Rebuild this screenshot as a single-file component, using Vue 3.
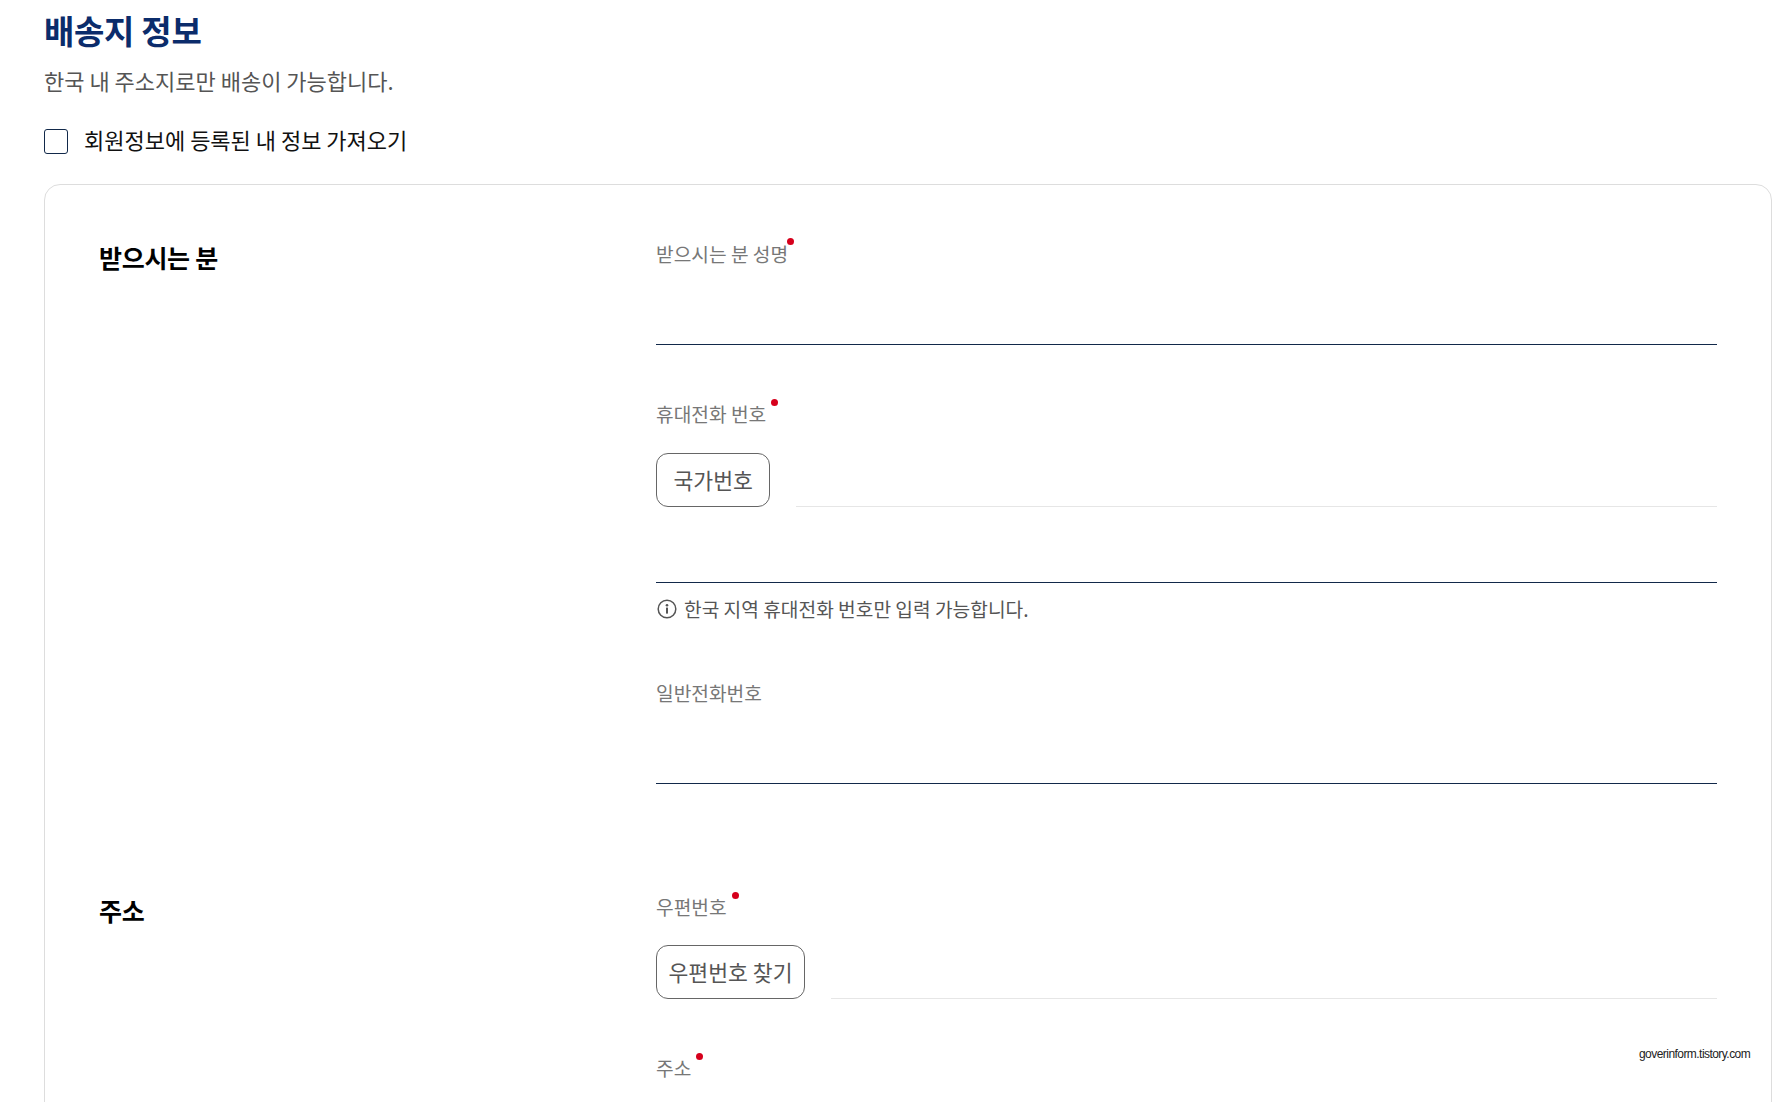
<script setup>
const groups = [
  {
    title: '받으시는 분',
    cls: 'group-a',
    fields: [
      { label: '받으시는 분 성명', required: true, kind: 'line', cls: 'f-name' },
      { label: '휴대전화 번호', required: true, kind: 'phone', button: '국가번호', cls: 'f-phone' },
      { label: '일반전화번호', required: false, kind: 'line', cls: 'f-tel' },
    ],
  },
  {
    title: '주소',
    cls: 'group-b',
    fields: [
      { label: '우편번호', required: true, kind: 'zip', button: '우편번호 찾기', cls: 'f-zip' },
      { label: '주소', required: true, kind: 'none', cls: 'f-addr' },
    ],
  },
]
</script>

<template>
  <div class="page">
    <h1 class="title">배송지 정보</h1>
    <p class="desc">한국 내 주소지로만 배송이 가능합니다.</p>
    <label class="check">
      <span class="box"></span>
      <span class="check-text">회원정보에 등록된 내 정보 가져오기</span>
    </label>
    <section class="card">
      <div v-for="g in groups" :key="g.title" class="group" :class="g.cls">
        <h2 class="group-title">{{ g.title }}</h2>
        <div class="fields">
          <div v-for="f in g.fields" :key="f.label" class="field" :class="f.cls">
            <div class="label"><span class="label-text" :class="{ req: f.required }">{{ f.label }}</span></div>
            <div v-if="f.kind === 'line'" class="underline"></div>
            <template v-if="f.kind === 'phone' || f.kind === 'zip'">
              <div class="btn-row">
                <button class="btn" type="button">{{ f.button }}</button>
                <div class="thin"></div>
              </div>
            </template>
            <template v-if="f.kind === 'phone'">
              <div class="underline second"></div>
              <div class="help">
                <svg class="info" viewBox="0 0 20 20" width="20" height="20" fill="none">
                  <circle cx="10" cy="10" r="8.8" stroke="#555" stroke-width="1.5" />
                  <circle cx="10" cy="6.2" r="1.3" fill="#555" />
                  <rect x="9" y="8.6" width="2" height="6" fill="#555" />
                </svg>
                <span>한국 지역 휴대전화 번호만 입력 가능합니다.</span>
              </div>
            </template>
          </div>
        </div>
      </div>
      <span class="mark">goverinform.tistory.com</span>
    </section>
  </div>
</template>

<style scoped>
.page {
  height: 1102px;
  overflow: hidden;
  box-sizing: border-box;
  padding: 0 19px 0 44px;
  background: #fff;
  font-family: "Noto Sans CJK KR", "Noto Sans", sans-serif;
}
.title {
  margin: 0;
  padding-top: 7px;
  font-size: 33px;
  line-height: 46px;
  font-weight: 700;
  color: #0b2c6b;
  letter-spacing: -0.3px;
}
.desc {
  margin: 11px 0 0;
  font-size: 22px;
  line-height: 32px;
  color: #555;
  font-weight: 400;
}
.check {
  display: flex;
  align-items: center;
  gap: 16px;
  margin-top: 27px;
  height: 32px;
}
.box {
  width: 24px;
  height: 25px;
  box-sizing: border-box;
  margin-top: 4px;
  border: 1px solid #12294a;
  border-radius: 3px;
  background: #fff;
}
.check-text {
  font-size: 22px;
  line-height: 32px;
  color: #111;
}
.card {
  position: relative;
  margin-top: 29px;
  height: 1100px;
  box-sizing: border-box;
  border: 1px solid #ddd;
  border-radius: 16px;
  padding: 54px 54px 0;
}
.group {
  display: grid;
  grid-template-columns: 557px 1061px;
}
.group-b {
  margin-top: 108px;
}
.group-title {
  margin: 0;
  font-size: 25px;
  line-height: 36px;
  font-weight: 700;
  color: #000;
  letter-spacing: -0.3px;
}
.label {
  height: 30px;
  line-height: 30px;
  font-size: 19.2px;
  color: #777;
}
.label-text {
  position: relative;
  display: inline-block;
}
.label-text.req::after {
  content: "";
  position: absolute;
  right: -12px;
  top: 0;
  width: 7px;
  height: 7px;
  border-radius: 50%;
  background: #d6001c;
}
.f-name .label-text.req::after {
  right: -6px;
  top: -1px;
}
.underline {
  height: 1px;
  margin-top: 75px;
  background: #12294a;
}
.f-phone {
  margin-top: 54px;
}
.btn-row {
  display: flex;
  align-items: flex-end;
  gap: 26px;
  margin-top: 23px;
}
.f-phone .btn-row {
  margin-top: 24px;
}
.btn {
  height: 54px;
  box-sizing: border-box;
  padding: 0 16.5px;
  border: 1px solid #666;
  border-radius: 12px;
  background: #fff;
  font-family: inherit;
  font-size: 21.6px;
  line-height: 30px;
  color: #555;
}
.f-zip .btn {
  padding: 0 11.5px;
}
.thin {
  flex: 1;
  height: 1px;
  background: #e6e6e6;
}
.underline.second {
  margin-top: 75px;
}
.help {
  display: flex;
  align-items: center;
  gap: 7px;
  margin-top: 13px;
  height: 26px;
  font-size: 19.2px;
  color: #555;
}
.info {
  flex: none;
  margin-left: 1px;
}
.f-tel {
  margin-top: 56px;
}
.f-addr {
  margin-top: 54px;
}
.mark {
  position: absolute;
  left: 1594px;
  top: 861px;
  font-size: 12px;
  line-height: 16px;
  letter-spacing: -0.55px;
  color: #222;
  white-space: nowrap;
  font-family: "Liberation Sans", sans-serif;
}
</style>

<style>
html, body { margin: 0; background: #fff; overflow: hidden; }
</style>
